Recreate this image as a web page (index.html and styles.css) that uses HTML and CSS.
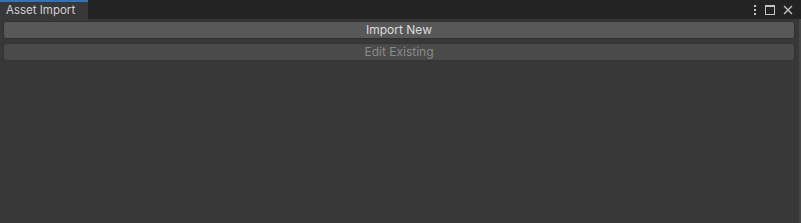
FILE: index.html
```html
<!DOCTYPE html>
<html>
<head>
<meta charset="utf-8">
<link rel="stylesheet" href="styles.css">
</head>
<body>
<div class="window">
  <div class="tabbar">
    <div class="tab">Asset Import</div>
    <div class="spacer"></div>
    <div class="tools">
      <svg class="icon" width="6" height="12" viewBox="0 0 6 12"><rect x="2" y="1" width="2" height="2" fill="#c4c4c4"/><rect x="2" y="5" width="2" height="2" fill="#c4c4c4"/><rect x="2" y="9" width="2" height="2" fill="#c4c4c4"/></svg>
      <svg class="icon" width="12" height="12" viewBox="0 0 12 12"><rect x="1.5" y="1.5" width="9" height="9" fill="none" stroke="#c4c4c4" stroke-width="1"/><rect x="1" y="1" width="10" height="2" fill="#c4c4c4"/></svg>
      <svg class="icon" width="12" height="12" viewBox="0 0 12 12"><path d="M2 2 L10 10 M10 2 L2 10" stroke="#c4c4c4" stroke-width="1.4"/></svg>
    </div>
  </div>
  <div class="content">
    <div class="main">
      <button class="btn">Import New</button>
      <button class="btn disabled">Edit Existing</button>
    </div>
    <div class="edge"></div>
  </div>
</div>
</body>
</html>
```
FILE: styles.css
```css
html, body { margin: 0; padding: 0; }
body {
  width: 801px; height: 223px; overflow: hidden;
  background: #383838;
  font-family: Inter, "Noto Sans", sans-serif;
  font-size: 12px;
}
.window { display: flex; flex-direction: column; height: 223px; }
.tabbar {
  height: 19px; display: flex; align-items: stretch;
  background: #232323;
}
.tab {
  padding-left: 6px;
  background: #383838;
  border-top: 2px solid #3a72b0;
  color: #d2d2d2; line-height: 17px; font-size: 11.5px;
  box-sizing: border-box; width: 88px;
}
.spacer { flex: 1; }
.tools { display: flex; align-items: center; gap: 6px; padding-right: 7px; }
.icon { display: block; }
.content { flex: 1; display: flex; }
.main { flex: 1; display: flex; flex-direction: column; gap: 4px; padding: 2px 4px 0 3px; }
.edge { width: 2px; background: #464646; }
.btn {
  height: 18px; margin: 0; padding: 0;
  background: #585858; border: 1px solid #303030; border-radius: 3px;
  color: #dcdcdc; font-family: Inter, "Noto Sans", sans-serif; font-size: 12px;
  line-height: 16px; text-align: center;
}
.btn.disabled { background: #4a4a4a; color: #8b8b8b; border-color: #333333; }
```
